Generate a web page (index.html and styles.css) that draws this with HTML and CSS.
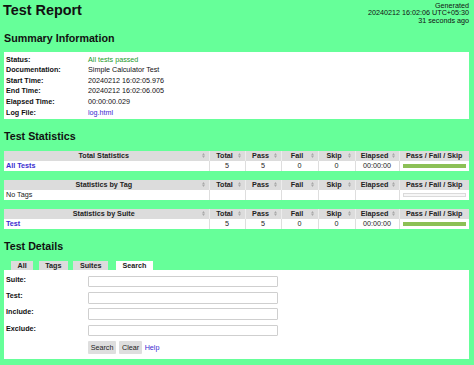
FILE: index.html
```html
<!DOCTYPE html>
<html lang="en">
<head>
    <meta charset="UTF-8">
    <title>Test Report</title>
    <link rel="stylesheet" href="styles.css">
</head>
<body>

<!--页头-->
<div class="header">
    <h1>Test Report</h1>
    <div class="generated">Generated<br>20240212 16:02:06 UTC+05:30<br>31 seconds ago</div>
</div>

<!--概要信息-->
<h2 class="summary-title">Summary Information</h2>
<div class="summary">
    <table>
        <tr><th>Status:</th><td class="pass">All tests passed</td></tr>
        <tr><th>Documentation:</th><td>Simple Calculator Test</td></tr>
        <tr><th>Start Time:</th><td>20240212 16:02:05.976</td></tr>
        <tr><th>End Time:</th><td>20240212 16:02:06.005</td></tr>
        <tr><th>Elapsed Time:</th><td>00:00:00.029</td></tr>
        <tr><th>Log File:</th><td><a href="javascript:;">log.html</a></td></tr>
    </table>
</div>

<!--统计-->
<h2>Test Statistics</h2>

<table class="stats">
    <colgroup><col class="c-name"><col class="c-num"><col class="c-num"><col class="c-num2"><col class="c-num2"><col class="c-time"><col></colgroup>
    <tr>
        <th>Total Statistics<svg class="sort" viewBox="0 0 4 7"><path d="M0 3 2 0 4 3zM0 4 2 7 4 4z"/></svg></th>
        <th>Total<svg class="sort" viewBox="0 0 4 7"><path d="M0 3 2 0 4 3zM0 4 2 7 4 4z"/></svg></th>
        <th>Pass<svg class="sort" viewBox="0 0 4 7"><path d="M0 3 2 0 4 3zM0 4 2 7 4 4z"/></svg></th>
        <th>Fail<svg class="sort" viewBox="0 0 4 7"><path d="M0 3 2 0 4 3zM0 4 2 7 4 4z"/></svg></th>
        <th>Skip<svg class="sort" viewBox="0 0 4 7"><path d="M0 3 2 0 4 3zM0 4 2 7 4 4z"/></svg></th>
        <th>Elapsed<svg class="sort" viewBox="0 0 4 7"><path d="M0 3 2 0 4 3zM0 4 2 7 4 4z"/></svg></th>
        <th class="graph-head">Pass / Fail / Skip</th>
    </tr>
    <tr>
        <td class="name"><a href="javascript:;">All Tests</a></td>
        <td>5</td><td>5</td><td>0</td><td>0</td><td>00:00:00</td>
        <td><div class="bar"></div></td>
    </tr>
</table>

<table class="stats">
    <colgroup><col class="c-name"><col class="c-num"><col class="c-num"><col class="c-num2"><col class="c-num2"><col class="c-time"><col></colgroup>
    <tr>
        <th>Statistics by Tag<svg class="sort" viewBox="0 0 4 7"><path d="M0 3 2 0 4 3zM0 4 2 7 4 4z"/></svg></th>
        <th>Total<svg class="sort" viewBox="0 0 4 7"><path d="M0 3 2 0 4 3zM0 4 2 7 4 4z"/></svg></th>
        <th>Pass<svg class="sort" viewBox="0 0 4 7"><path d="M0 3 2 0 4 3zM0 4 2 7 4 4z"/></svg></th>
        <th>Fail<svg class="sort" viewBox="0 0 4 7"><path d="M0 3 2 0 4 3zM0 4 2 7 4 4z"/></svg></th>
        <th>Skip<svg class="sort" viewBox="0 0 4 7"><path d="M0 3 2 0 4 3zM0 4 2 7 4 4z"/></svg></th>
        <th>Elapsed<svg class="sort" viewBox="0 0 4 7"><path d="M0 3 2 0 4 3zM0 4 2 7 4 4z"/></svg></th>
        <th class="graph-head">Pass / Fail / Skip</th>
    </tr>
    <tr>
        <td class="name plain">No Tags</td>
        <td></td><td></td><td></td><td></td><td></td>
        <td><div class="bar empty"></div></td>
    </tr>
</table>

<table class="stats">
    <colgroup><col class="c-name"><col class="c-num"><col class="c-num"><col class="c-num2"><col class="c-num2"><col class="c-time"><col></colgroup>
    <tr>
        <th>Statistics by Suite<svg class="sort" viewBox="0 0 4 7"><path d="M0 3 2 0 4 3zM0 4 2 7 4 4z"/></svg></th>
        <th>Total<svg class="sort" viewBox="0 0 4 7"><path d="M0 3 2 0 4 3zM0 4 2 7 4 4z"/></svg></th>
        <th>Pass<svg class="sort" viewBox="0 0 4 7"><path d="M0 3 2 0 4 3zM0 4 2 7 4 4z"/></svg></th>
        <th>Fail<svg class="sort" viewBox="0 0 4 7"><path d="M0 3 2 0 4 3zM0 4 2 7 4 4z"/></svg></th>
        <th>Skip<svg class="sort" viewBox="0 0 4 7"><path d="M0 3 2 0 4 3zM0 4 2 7 4 4z"/></svg></th>
        <th>Elapsed<svg class="sort" viewBox="0 0 4 7"><path d="M0 3 2 0 4 3zM0 4 2 7 4 4z"/></svg></th>
        <th class="graph-head">Pass / Fail / Skip</th>
    </tr>
    <tr>
        <td class="name"><a href="javascript:;">Test</a></td>
        <td>5</td><td>5</td><td>0</td><td>0</td><td>00:00:00</td>
        <td><div class="bar"></div></td>
    </tr>
</table>

<!--详细信息-->
<h2 class="details-title">Test Details</h2>
<ul class="tabs">
    <li>All</li>
    <li>Tags</li>
    <li>Suites</li>
    <li class="active">Search</li>
</ul>
<div class="panel">
    <div class="search-form">
        <label>Suite:</label><input type="text">
        <label>Test:</label><input type="text">
        <label>Include:</label><input type="text">
        <label>Exclude:</label><input type="text">
        <span></span>
        <div class="buttons">
            <button>Search</button><button>Clear</button><a href="javascript:;">Help</a>
        </div>
    </div>
</div>

</body>
</html>
```

FILE: styles.css
```css
* {
    margin: 0;
    padding: 0;
    box-sizing: border-box;
}

body {
    /*薄荷绿背景*/
    background-color: #66ff99;
    font-family: "Liberation Sans", Arial, sans-serif;
    font-size: 7.2px;
    color: #111;
    padding: 0 5px 0 4px;
}

a {
    color: #3a2bd0;
    text-decoration: none;
}

/*页头*/
.header {
    display: flex;
    justify-content: space-between;
    align-items: flex-start;
}

h1 {
    font-size: 14.4px;
    line-height: 14px;
    margin-top: 3px;
    margin-left: -1px;
}

.generated {
    text-align: right;
    line-height: 7.5px;
    margin-top: 1.5px;
}

h2 {
    font-size: 10.7px;
    line-height: 11px;
    margin-bottom: 9.3px;
}

h2.summary-title {
    margin-top: 8.7px;
    margin-bottom: 8.3px;
}

/*概要*/
.summary {
    background-color: #fff;
    padding: 2.6px 2px 1.2px;
}

.summary table {
    border-collapse: collapse;
}

.summary th {
    width: 82px;
    text-align: left;
    font-weight: bold;
    line-height: 10.6px;
}

.summary td {
    line-height: 10.6px;
}

.pass {
    color: #22992a;
}

.summary + h2 {
    margin-top: 11.3px;
}

/*统计表格*/
.stats {
    width: 100%;
    table-layout: fixed;
    border-collapse: collapse;
    margin-bottom: 9px;
}

.c-name {
    width: 205px;
}

.c-num {
    width: 36px;
}

.c-num2 {
    width: 37px;
}

.c-time {
    width: 44px;
}

.stats th {
    background-color: #dcdcdc;
    font-weight: bold;
    color: #222;
    line-height: 10px;
    height: 10px;
    padding: 0 2px;
    text-align: center;
    border-left: 1px solid #ececec;
}

.stats th:first-child,
.stats td:first-child {
    border-left: none;
}

.sort {
    float: right;
    width: 3px;
    height: 5px;
    margin-top: 2.5px;
    margin-right: 2px;
    fill: #a8a8a8;
}

.stats td {
    background-color: #fff;
    color: #222;
    line-height: 10px;
    height: 10px;
    text-align: center;
    border-left: 1px solid #dedede;
}

.stats td.name {
    text-align: left;
    padding-left: 2px;
    font-weight: bold;
}

.stats td.plain {
    font-weight: normal;
}

.bar {
    height: 3.5px;
    margin: 0 3px 0 3.5px;
    background-color: #8cc056;
}

.bar.empty {
    height: 4px;
    background-color: #f6f6f6;
    border: 1px solid #dadada;
}

/*详细信息*/
h2.details-title {
    margin-top: 11.9px;
    margin-bottom: 9px;
}

.tabs {
    list-style: none;
    display: flex;
    padding-left: 7px;
}

.tabs li {
    background-color: #dcdcdc;
    font-weight: bold;
    color: #222;
    line-height: 9.3px;
    padding: 0 6.5px;
    margin-right: 5.5px;
}

.tabs li.active {
    background-color: #fff;
    margin-left: 2.5px;
}

.panel {
    background-color: #fff;
    padding: 5.7px 2px 5.2px;
}

.search-form {
    display: grid;
    grid-template-columns: 81.7px 190px;
    row-gap: 4.7px;
    align-items: start;
}

.search-form label {
    font-weight: bold;
    line-height: 8.3px;
}

.search-form input {
    height: 11.6px;
    border: 1px solid #cfcfcf;
    border-radius: 1px;
    background-color: #fff;
}

.buttons {
    display: flex;
    align-items: center;
    margin-top: -0.4px;
}

.buttons button {
    font-family: inherit;
    font-size: 7.2px;
    color: #222;
    background-color: #dedede;
    border: none;
    border-radius: 1px;
    height: 13.3px;
    padding: 0 3px;
    margin-right: 2.5px;
}
```
